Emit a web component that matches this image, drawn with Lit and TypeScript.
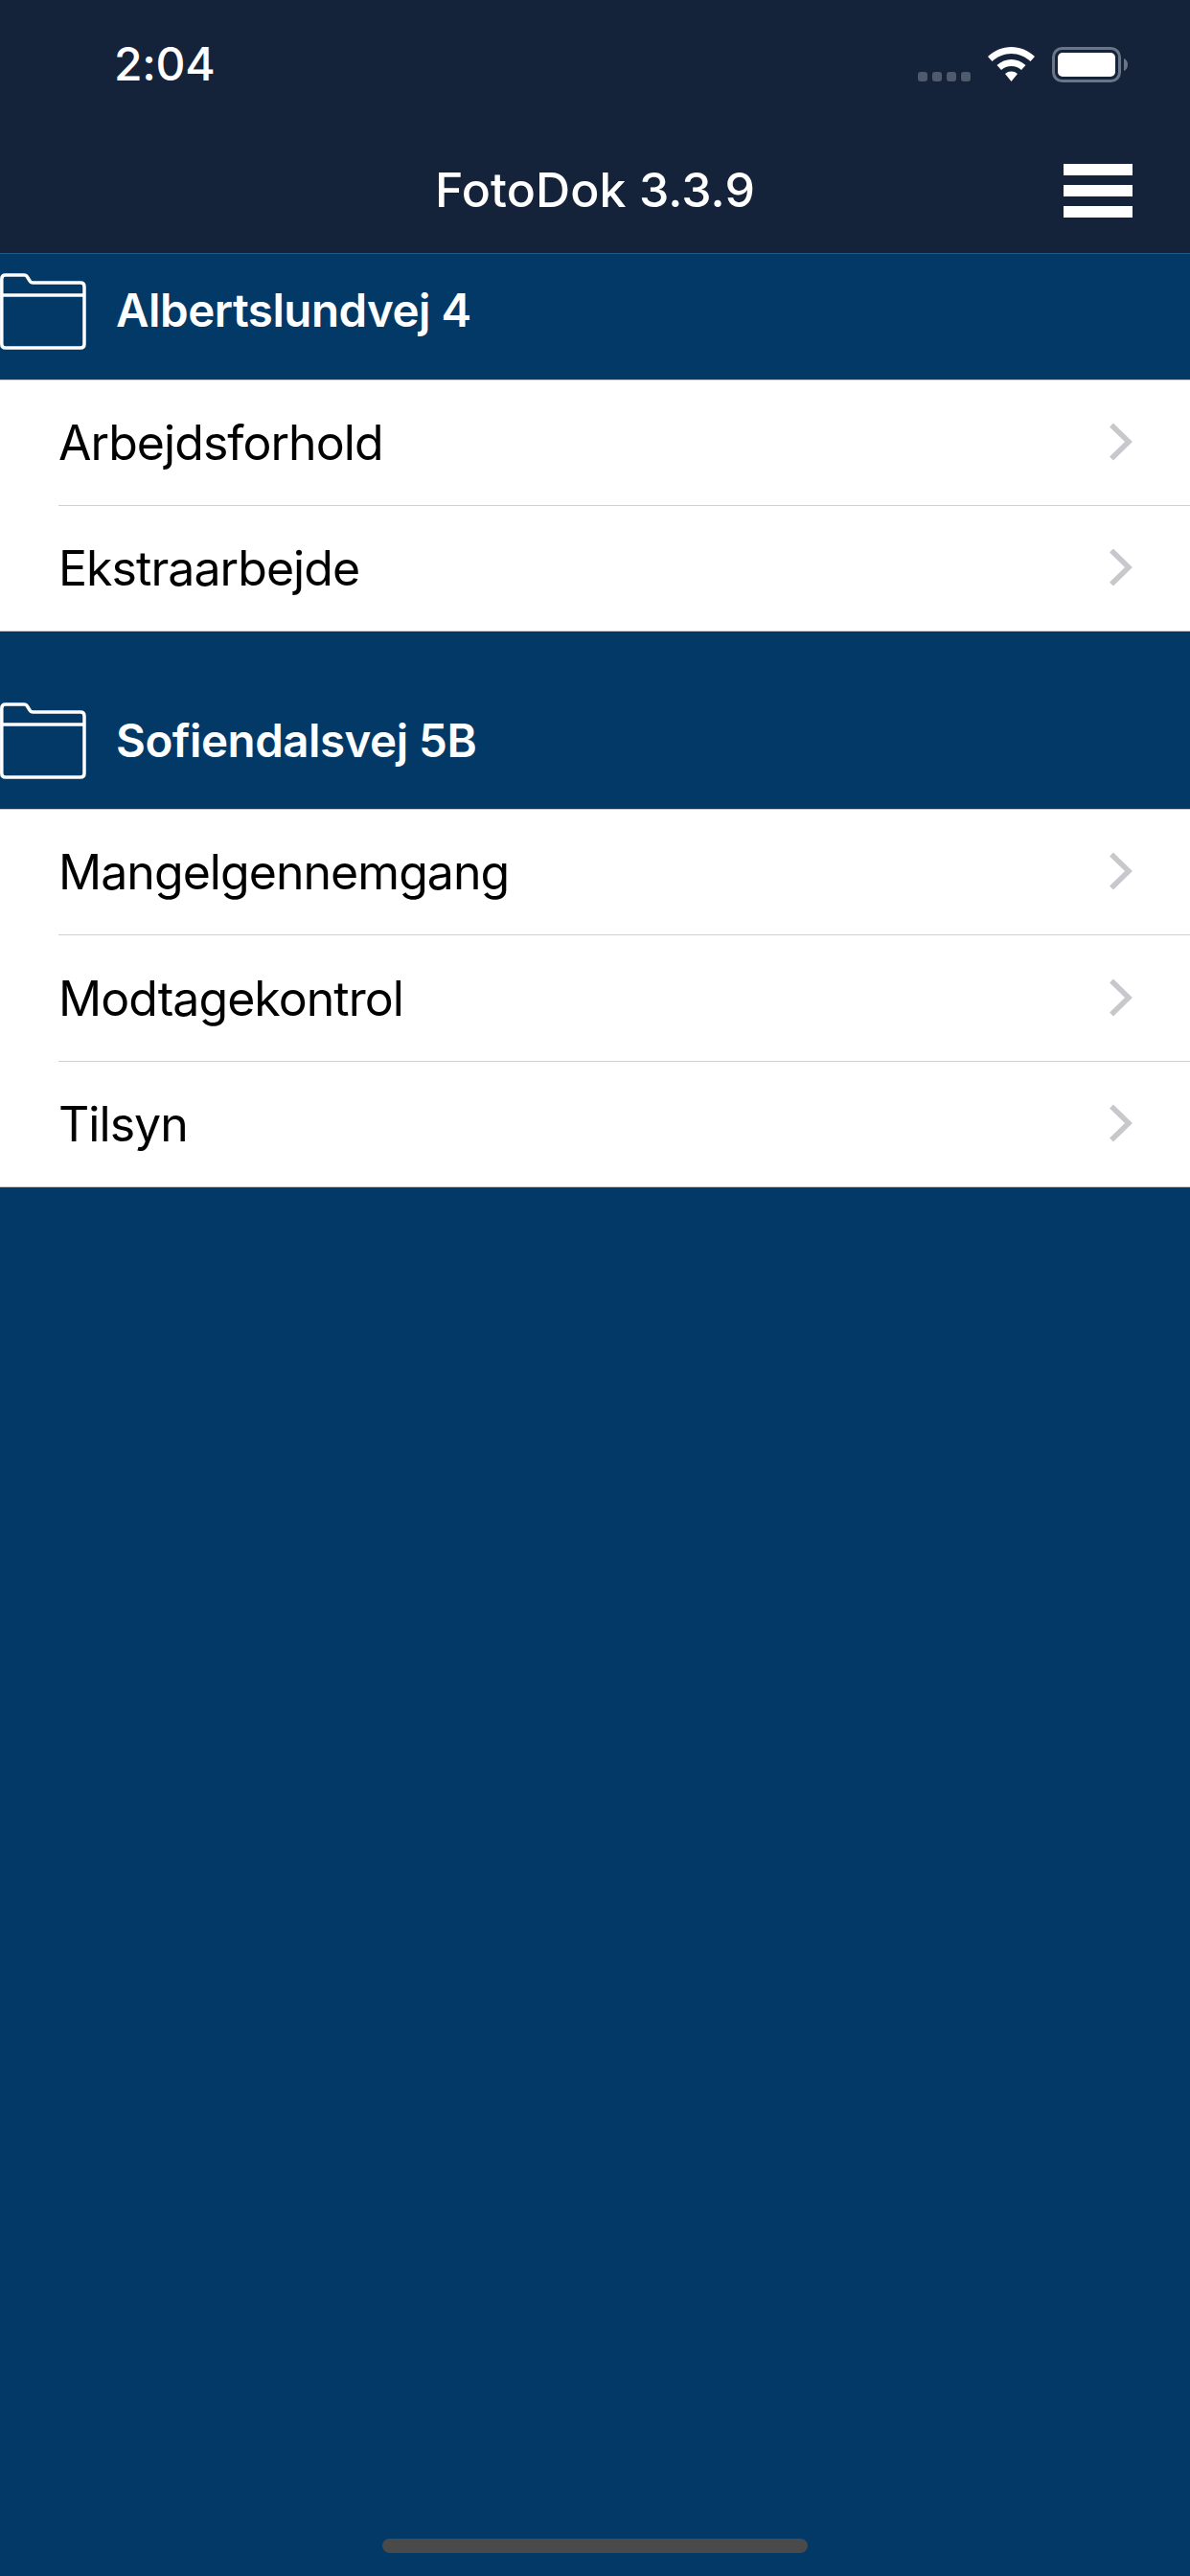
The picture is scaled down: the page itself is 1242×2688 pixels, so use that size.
import { LitElement, html, css, svg } from "lit";
import { customElement } from "lit/decorators.js";

const SECTIONS = [
  { name: "Albertslundvej 4", spaced: false, rows: ["Arbejdsforhold", "Ekstraarbejde"] },
  { name: "Sofiendalsvej 5B", spaced: true, rows: ["Mangelgennemgang", "Modtagekontrol", "Tilsyn"] },
];

const folder = svg`<svg class="folder" width="90" height="80" viewBox="0 0 90 80" fill="none" stroke="#fff" stroke-width="3.500" stroke-linejoin="round">
  <path d="M1.800 6 Q1.800 2 5.800 2 H25 Q27.500 2 28.500 4 L31 8 Q32 10 34.500 10 H84 Q88 10 88 14 V74 Q88 78 84 78 H5.800 Q1.800 78 1.800 74 Z"/>
  <path d="M1.800 23 H88"/>
</svg>`;

const chevron = svg`<svg class="chev" width="26" height="40" viewBox="0 0 26 40" fill="none" stroke="#c7c7cc" stroke-width="5.500">
  <path d="M3 2.500 L21 20 L3 37.500"/>
</svg>`;

@customElement("app-root")
export class AppRoot extends LitElement {
  static styles = css`
    :host {
      display: flex;
      flex-direction: column;
      width: 1242px;
      height: 2688px;
      background: #023966;
      font-family: Inter, "Liberation Sans", sans-serif;
      overflow: hidden;
    }
    .top {
      height: 265px;
      box-sizing: border-box;
      background: #15233a;
      border-bottom: 1px solid #1f5a8c;
      flex: none;
    }
    .status {
      height: 134px;
      display: flex;
      justify-content: space-between;
      padding: 44px 65px 0 119px;
      box-sizing: border-box;
      color: #fff;
    }
    .time {
      font-size: 48px;
      font-weight: 500;
      line-height: 46px;
      letter-spacing: -0.3px;
    }
    .status-icons {
      display: flex;
      align-items: flex-start;
      gap: 18px;
      padding-top: 5px;
    }
    .dots {
      display: flex;
      gap: 5px;
      margin-top: 26px;
    }
    .dots i {
      width: 10px;
      height: 10px;
      border-radius: 3px;
      background: #4f5b6c;
    }
    .nav {
      display: grid;
      grid-template-columns: 1fr auto 1fr;
      align-items: center;
      height: 130px;
      padding: 0 60px;
    }
    .title {
      color: #fff;
      font-size: 50px;
      font-weight: 500;
      letter-spacing: 0.1px;
      padding-bottom: 3px;
    }
    .menu {
      justify-self: end;
      display: flex;
      flex-direction: column;
      gap: 10px;
      width: 72px;
    }
    .menu i {
      height: 12px;
      background: #fff;
    }
    .head {
      display: flex;
      align-items: center;
      gap: 31px;
      height: 131px;
      padding: 0 0 14px 0;
      box-sizing: border-box;
      color: #fff;
      font-size: 47.5px;
      font-weight: 600;
      letter-spacing: -0.5px;
    }
    .head.spaced {
      height: 185px;
      padding-top: 55px;
    }
    .folder { flex: none; margin-top: 2px; }
    .rows {
      background: #fff;
      flex: none;
      border-top: 1px solid #c8c8cc;
      border-bottom: 1px solid #c8c8cc;
    }
    .row {
      margin-left: 61px;
      height: 132px;
      box-sizing: border-box;
      display: flex;
      align-items: center;
      justify-content: space-between;
      padding-right: 59px;
      border-bottom: 1px solid #d0d0d4;
      color: #000;
      font-size: 50px;
      font-weight: 400;
      letter-spacing: -0.95px;
    }
    .row:first-child { height: 131px; }
    .row:last-child { border-bottom: none; height: 130px; }
    .chev { margin-bottom: 2px; }
    .spacer { flex: 1; }
    .home {
      width: 444px;
      height: 15px;
      border-radius: 8px;
      background: #4a4a4a;
      align-self: center;
      margin-bottom: 24px;
      flex: none;
    }
  `;

  render() {
    return html`
      <div class="top">
        <div class="status">
          <span class="time">2:04</span>
          <div class="status-icons">
            <div class="dots"><i></i><i></i><i></i><i></i></div>
            <svg width="49" height="37" viewBox="0 0 49 37" fill="#fff">
              <path d="M24.500 0 C33.500 0 42 3.500 49 10 L44.500 15 C39 10 32 7 24.500 7 C17 7 10 10 4.500 15 L0 10 C7 3.500 15.500 0 24.500 0 Z"/>
              <path d="M24.500 13 C30 13 35 15 39.500 19 L35 24 C32 21.500 28.500 20 24.500 20 C20.500 20 17 21.500 14 24 L9.500 19 C14 15 19 13 24.500 13 Z"/>
              <path d="M24.500 25.500 C27 25.500 29 26.300 31 28 L24.500 36 L18 28 C20 26.300 22 25.500 24.500 25.500 Z"/>
            </svg>
            <svg width="79" height="37" viewBox="0 0 79 37">
              <rect x="1.500" y="1.500" width="69" height="34" rx="9" fill="none" stroke="#6a7585" stroke-width="3"/>
              <rect x="6" y="6" width="60" height="25" rx="5" fill="#fff"/>
              <path d="M75 12 C77.500 13 79 15.500 79 18.500 C79 21.500 77.500 24 75 25 Z" fill="#6a7585"/>
            </svg>
          </div>
        </div>
        <div class="nav">
          <span></span>
          <span class="title">FotoDok 3.3.9</span>
          <div class="menu"><i></i><i></i><i></i></div>
        </div>
      </div>
      ${SECTIONS.map(
        (s) => html`
          <div class="head ${s.spaced ? "spaced" : ""}">${folder}<span>${s.name}</span></div>
          <div class="rows">
            ${s.rows.map((r) => html`<div class="row"><span>${r}</span>${chevron}</div>`)}
          </div>
        `
      )}
      <div class="spacer"></div>
      <div class="home"></div>
    `;
  }
}
